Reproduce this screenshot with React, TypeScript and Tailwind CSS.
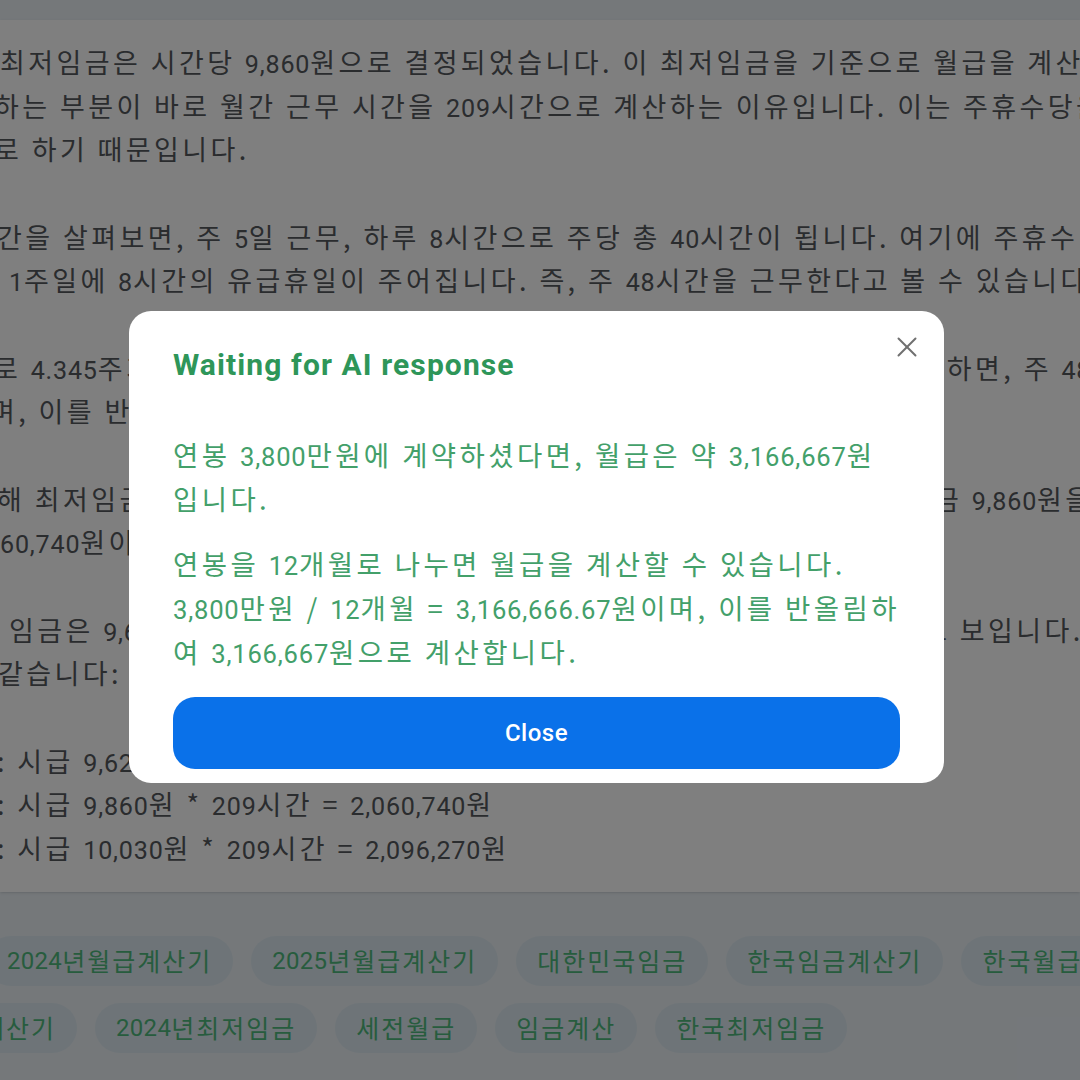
import { X } from "lucide-react";

// numbers in this UI are set in Roboto, a touch smaller than the Hangul around them
function Txt({ text, num }: { text: string; num: string }) {
  const parts = text.split(/(\d[\d.,]*\d|\d)/);
  return (
    <>
      {parts.map((p, i) =>
        i % 2 === 1 ? (
          <span key={i} className={num}>
            {p}
          </span>
        ) : (
          p
        )
      )}
    </>
  );
}

const bodyNum = "font-[Roboto,sans-serif] text-[0.93em] leading-none tracking-[0.8px]";
const tagNum = "font-[Roboto,sans-serif] text-[0.96em] leading-none tracking-[0.3px]";

const paragraphs: { text: string; cls: string }[][] = [
  [
    { text: "최저임금은 시간당 9,860원으로 결정되었습니다. 이 최저임금을 기준으로 월급을 계산할 때 주목해야", cls: "ml-0" },
    { text: "하는 부분이 바로 월간 근무 시간을 209시간으로 계산하는 이유입니다. 이는 주휴수당을 포함하여 계산", cls: "-ml-[6px]" },
    { text: "로 하기 때문입니다.", cls: "-ml-[6px]" },
  ],
  [
    { text: "간을 살펴보면, 주 5일 근무, 하루 8시간으로 주당 총 40시간이 됩니다. 여기에 주휴수당이 포함되면", cls: "-ml-[3px]" },
    { text: "1주일에 8시간의 유급휴일이 주어집니다. 즉, 주 48시간을 근무한다고 볼 수 있습니다.", cls: "ml-[9px]" },
  ],
  [
    { text: "로 4.345주가 됩니다. 따라서 한 달 평균 근무 시간을 주 단위 기준으로 계산하면, 주 48시간 × 4.345주", cls: "-ml-[7px]" },
    { text: "며, 이를 반올림하여 한 달 근무 시간을 209시간으로 계산합니다.", cls: "-ml-[10px]" },
  ],
  [
    { text: "해 최저임금으로 받을 수 있는 월급을 계산해 보면, 2024년 시간 당 최저임금 9,860원을 209시간에 곱하여", cls: "-ml-[3px]" },
    { text: "60,740원이 됩니다.", cls: "ml-0" },
  ],
  [
    { text: "임금은 9,620원이고, 2025년에는 10,030원으로 올라 임금도 더 오를 것으로 보입니다. 연도별", cls: "ml-[9px]" },
    { text: "같습니다:", cls: "-ml-[2px]" },
  ],
  [
    { text: ": 시급 9,620원 * 209시간 = 2,010,580원", cls: "-ml-[3px]" },
    { text: ": 시급 9,860원 * 209시간 = 2,060,740원", cls: "-ml-[3px]" },
    { text: ": 시급 10,030원 * 209시간 = 2,096,270원", cls: "-ml-[3px]" },
  ],
];

const tagRows: { tags: string[]; cls: string }[] = [
  { tags: ["2024년월급계산기", "2025년월급계산기", "대한민국임금", "한국임금계산기", "한국월급계산기"], cls: "-ml-[14px]" },
  { tags: ["최저월급계산기", "2024년최저임금", "세전월급", "임금계산", "한국최저임금"], cls: "-ml-[140px]" },
];

export default function App() {
  return (
    <div className="relative h-[1080px] w-[1080px] overflow-hidden bg-[#eaf0f5] font-['Noto_Sans_CJK_KR',sans-serif]">
      <div className="pt-[20px]">
        <article className="bg-white pt-[20px] pb-[22px] text-[27px] leading-[43.67px] tracking-[3.4px] text-[#55585d] shadow-sm">
          {paragraphs.map((p, i) => (
            <div key={i} className="mb-[43.67px] last:mb-0">
              {p.map((line, j) => (
                <div key={j} className={`whitespace-nowrap ${line.cls}`}>
                  <Txt text={line.text} num={bodyNum} />
                </div>
              ))}
            </div>
          ))}
        </article>

        <div className="flex flex-col gap-[17px] pt-[44px]">
          {tagRows.map((row, i) => (
            <div key={i} className={`flex gap-[18px] ${row.cls}`}>
              {row.tags.map((tag) => (
                <span
                  key={tag}
                  className="flex h-[50px] shrink-0 items-center whitespace-nowrap rounded-full bg-[#dce9f0] px-[21px] text-[25px] tracking-[2px] text-[#4fb97c]"
                >
                  <Txt text={tag} num={tagNum} />
                </span>
              ))}
            </div>
          ))}
        </div>
      </div>

      {/* dialog */}
      <div className="absolute inset-0 flex items-start bg-black/50 pl-[129px] pt-[311px]">
        <div className="relative w-[815px] rounded-[22px] bg-white px-[44px] pt-[36px] pb-[14px]">
          <button type="button" className="absolute right-[20px] top-[19px] text-[#707070]">
            <X size={34} strokeWidth={1.4} />
          </button>
          <h2 className="font-[Roboto,sans-serif] text-[30px] font-bold leading-[36px] tracking-[1.1px] text-[#2e9659]">
            Waiting for AI response
          </h2>
          <div className="mt-[50px] whitespace-nowrap text-[27.5px] leading-[43.7px] tracking-[3.4px] text-[#43a06a]">
            <p>
              <Txt text="연봉 3,800만원에 계약하셨다면, 월급은 약 3,166,667원" num={bodyNum} />
              <br />
              입니다.
            </p>
            <p className="mt-[22px]">
              <Txt text="연봉을 12개월로 나누면 월급을 계산할 수 있습니다." num={bodyNum} />
              <br />
              <Txt text="3,800만원 / 12개월 = 3,166,666.67원이며, 이를 반올림하" num={bodyNum} />
              <br />
              <Txt text="여 3,166,667원으로 계산합니다." num={bodyNum} />
            </p>
          </div>
          <button
            type="button"
            className="mt-[23px] flex h-[72px] w-full items-center justify-center rounded-[22px] bg-[#0a71e9] font-[Roboto,sans-serif] text-[24px] font-medium tracking-[0.5px] text-white"
          >
            Close
          </button>
        </div>
      </div>
    </div>
  );
}
